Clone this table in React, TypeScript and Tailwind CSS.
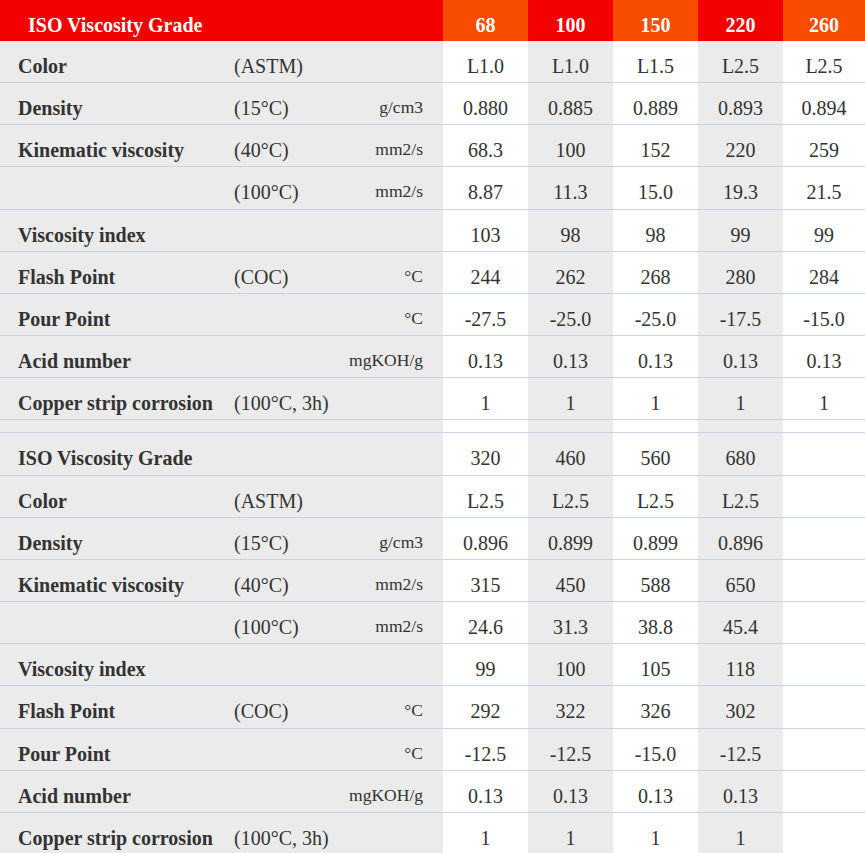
import React from "react";

type Row = { label?: string; sub?: string; unit?: string; values: string[] };

const top: Row[] = [
  { label: "Color", sub: "(ASTM)", values: ["L1.0", "L1.0", "L1.5", "L2.5", "L2.5"] },
  { label: "Density", sub: "(15°C)", unit: "g/cm3", values: ["0.880", "0.885", "0.889", "0.893", "0.894"] },
  { label: "Kinematic viscosity", sub: "(40°C)", unit: "mm2/s", values: ["68.3", "100", "152", "220", "259"] },
  { sub: "(100°C)", unit: "mm2/s", values: ["8.87", "11.3", "15.0", "19.3", "21.5"] },
  { label: "Viscosity index", values: ["103", "98", "98", "99", "99"] },
  { label: "Flash Point", sub: "(COC)", unit: "°C", values: ["244", "262", "268", "280", "284"] },
  { label: "Pour Point", unit: "°C", values: ["-27.5", "-25.0", "-25.0", "-17.5", "-15.0"] },
  { label: "Acid number", unit: "mgKOH/g", values: ["0.13", "0.13", "0.13", "0.13", "0.13"] },
  { label: "Copper strip corrosion", sub: "(100°C, 3h)", values: ["1", "1", "1", "1", "1"] },
];

const bottom: Row[] = [
  { label: "ISO Viscosity Grade", values: ["320", "460", "560", "680", ""] },
  { label: "Color", sub: "(ASTM)", values: ["L2.5", "L2.5", "L2.5", "L2.5", ""] },
  { label: "Density", sub: "(15°C)", unit: "g/cm3", values: ["0.896", "0.899", "0.899", "0.896", ""] },
  { label: "Kinematic viscosity", sub: "(40°C)", unit: "mm2/s", values: ["315", "450", "588", "650", ""] },
  { sub: "(100°C)", unit: "mm2/s", values: ["24.6", "31.3", "38.8", "45.4", ""] },
  { label: "Viscosity index", values: ["99", "100", "105", "118", ""] },
  { label: "Flash Point", sub: "(COC)", unit: "°C", values: ["292", "322", "326", "302", ""] },
  { label: "Pour Point", unit: "°C", values: ["-12.5", "-12.5", "-15.0", "-12.5", ""] },
  { label: "Acid number", unit: "mgKOH/g", values: ["0.13", "0.13", "0.13", "0.13", ""] },
  { label: "Copper strip corrosion", sub: "(100°C, 3h)", values: ["1", "1", "1", "1", ""] },
];

const grid = "grid grid-cols-[234px_100px_109px_85px_85px_85px_85px_82px]";
const colBg = ["bg-white", "bg-[#ebebeb]", "bg-white", "bg-[#ebebeb]", "bg-white"];
const headBg = ["bg-[#f84c00]", "bg-[#f50000]", "bg-[#f84c00]", "bg-[#f50000]", "bg-[#f84c00]"];

const DataRow = ({ row }: { row: Row }) => (
  <div className={`${grid} h-[42.17px] border-b border-[#c9d4e2]`}>
    <div className="bg-[#ebebeb] pl-[18px] pt-[13px] font-bold whitespace-nowrap">{row.label}</div>
    <div className="bg-[#ebebeb] pt-[13px] whitespace-nowrap">{row.sub}</div>
    <div className="bg-[#ebebeb] pr-[20px] pt-[12px] text-right text-[17.5px] whitespace-nowrap">{row.unit}</div>
    {row.values.map((v, i) => (
      <div key={i} className={`${colBg[i]} pt-[13px] text-center`}>
        {v}
      </div>
    ))}
  </div>
);

export default function App() {
  return (
    <div className="font-serif">
      <div className="w-[865px] bg-white text-[20px] leading-6 text-[#333333] font-['Liberation_Serif',serif]">
        <div className={`${grid} h-[41px] font-bold text-white`}>
          <div className="col-span-3 bg-[#f50000] pl-[28px] pt-[13px]">ISO Viscosity Grade</div>
          {["68", "100", "150", "220", "260"].map((v, i) => (
            <div key={v} className={`${headBg[i]} pt-[13px] text-center`}>
              {v}
            </div>
          ))}
        </div>
        {top.map((r, i) => (
          <DataRow key={"t" + i} row={r} />
        ))}
        <div className={`${grid} h-[13px] border-b border-[#c9d4e2]`}>
          <div className="col-span-3 bg-[#ebebeb]" />
          {colBg.map((c, i) => (
            <div key={i} className={c} />
          ))}
        </div>
        {bottom.map((r, i) => (
          <DataRow key={"b" + i} row={r} />
        ))}
      </div>
    </div>
  );
}
